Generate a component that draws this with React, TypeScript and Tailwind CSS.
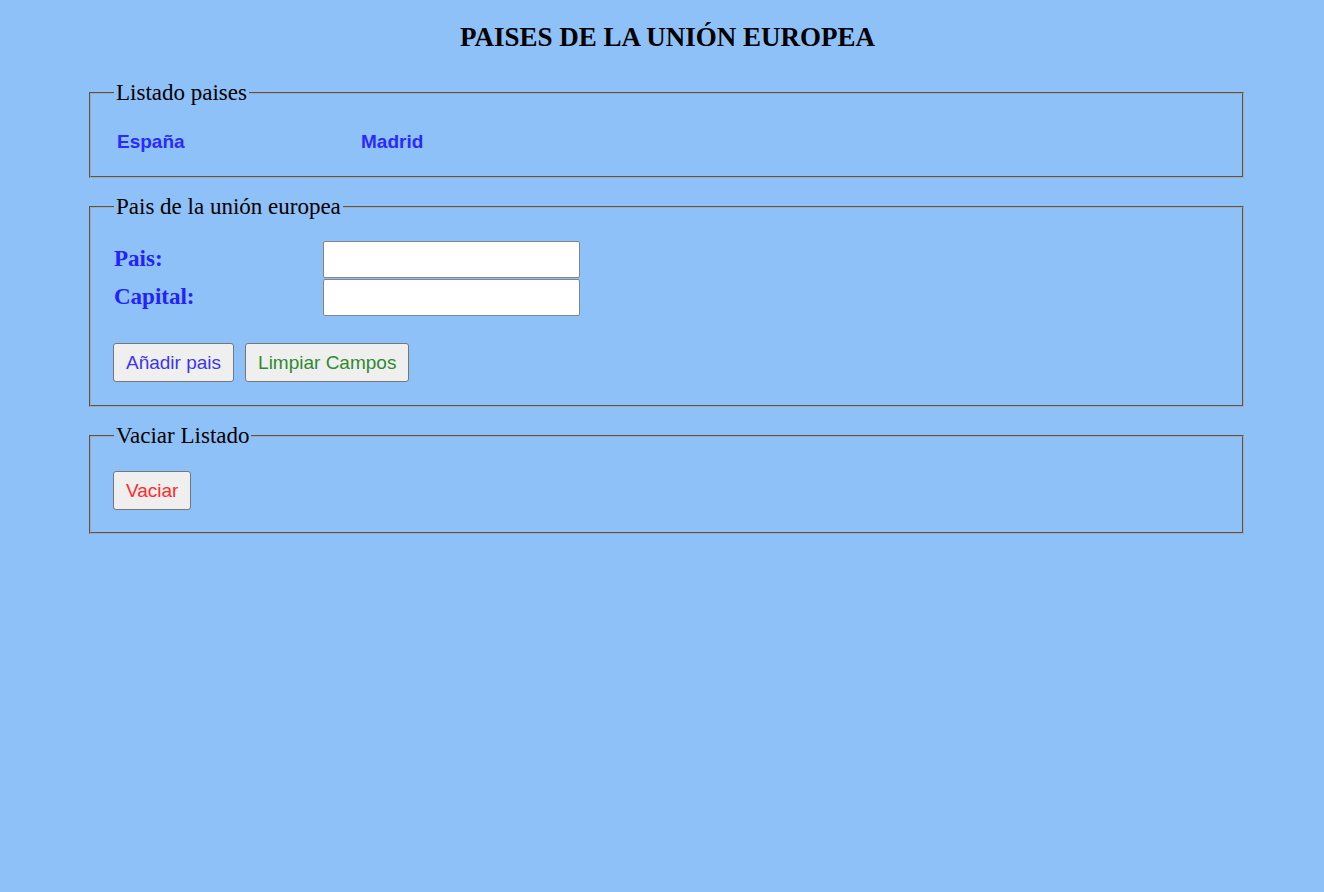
import type { ReactNode } from 'react';

const serif = "font-['Liberation_Serif','Times_New_Roman',serif]";
const sans = "font-['Liberation_Sans',Arial,sans-serif]";

const paises = [{ nombre: 'España', capital: 'Madrid' }];

function Grupo({ titulo, className, children }: { titulo: string; className?: string; children: ReactNode }) {
  return (
    <fieldset
      className={`mx-[89px] w-[1155px] border-2 border-[#a9a9a9] [border-style:groove] pl-[22px] pr-4 ${className ?? ''}`}
    >
      <legend className={`${serif} ml-[1px] px-[2px] text-[23px] leading-[26px] text-black`}>{titulo}</legend>
      {children}
    </fieldset>
  );
}

function Boton({ color, children }: { color: string; children: ReactNode }) {
  return (
    <button
      type="button"
      className={`${sans} ${color} h-[39px] rounded-[3px] border border-[#767676] bg-[#efefef] px-[12px] text-[19px] leading-none`}
    >
      {children}
    </button>
  );
}

export default function App() {
  return (
    <div className="min-h-[892px] bg-[#8fc1f9] pt-[22px]">
      <h1 className={`${serif} pl-[11px] text-center text-[27px] font-bold leading-[31px] text-black`}>
        PAISES DE LA UNIÓN EUROPEA
      </h1>

      <Grupo titulo="Listado paises" className="mt-[27px] pt-[25px] pb-[23px]">
        {paises.map((pais) => (
          <div key={pais.nombre} className={`${sans} flex text-[19px] font-bold leading-[22px] text-[#2a2aff]`}>
            <span className="ml-[4px] w-[244px]">{pais.nombre}</span>
            <span>{pais.capital}</span>
          </div>
        ))}
      </Grupo>

      <Grupo titulo="Pais de la unión europea" className="mt-[16px] pt-[21px] pb-[23px]">
        <div className="grid grid-cols-[210px_257px] gap-y-[1px]">
          <label className={`${serif} flex items-center pl-[1px] text-[23px] font-bold text-[#2222ff]`}>Pais:</label>
          <input className="h-[37px] rounded-[2px] border border-[#858585] bg-white" />
          <label className={`${serif} flex items-center pl-[1px] text-[23px] font-bold text-[#2222ff]`}>Capital:</label>
          <input className="h-[37px] rounded-[2px] border border-[#858585] bg-white" />
        </div>
        <div className="mt-[27px] flex gap-[11px]">
          <Boton color="text-[#3d35f0]">Añadir pais</Boton>
          <Boton color="text-[#2f8a2f]">Limpiar Campos</Boton>
        </div>
      </Grupo>

      <Grupo titulo="Vaciar Listado" className="mt-[16px] pt-[22px] pb-[22px]">
        <Boton color="text-[#ff2a2a]">Vaciar</Boton>
      </Grupo>
    </div>
  );
}
